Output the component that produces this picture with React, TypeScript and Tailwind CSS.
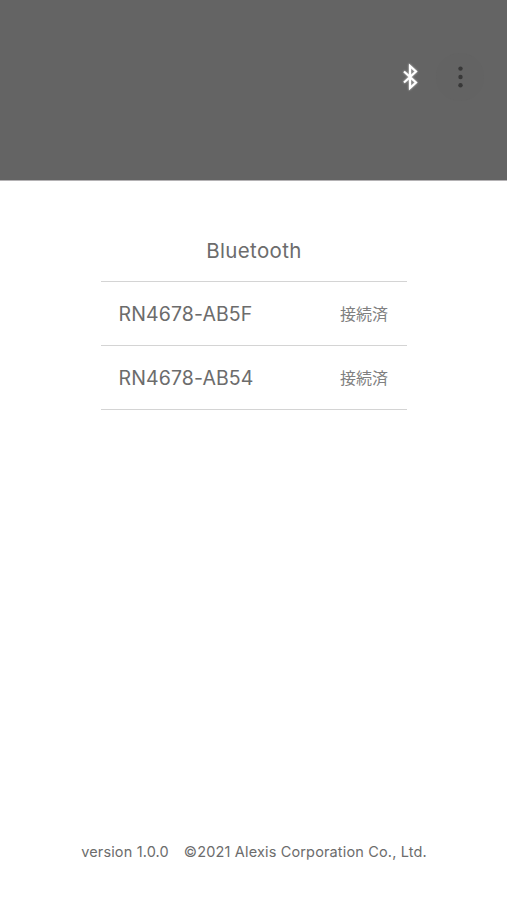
const devices = [
  { name: "RN4678-AB5F", status: "接続済" },
  { name: "RN4678-AB54", status: "接続済" },
]

function BluetoothIcon() {
  return (
    <svg
      className="w-5 h-8 drop-shadow-[0_0_1px_#ffffff99]"
      viewBox="0 0 20 32"
      fill="none"
      stroke="white"
      strokeWidth="2.2"
    >
      <path d="M4 10.5 L16 21.5 L10 27 V5 L16 10.5 L4 21.5" />
    </svg>
  )
}

function MenuIcon() {
  return (
    <svg className="w-6 h-6" viewBox="0 0 24 24" fill="#383838">
      <circle cx="12.5" cy="3.6" r="2.2" />
      <circle cx="12.5" cy="12" r="2.2" />
      <circle cx="12.5" cy="20.2" r="2.2" />
    </svg>
  )
}

export default function App() {
  return (
    <div className="flex flex-col w-full h-[900px] bg-white font-['Inter','Noto_Sans_CJK_JP',sans-serif] text-[#6c6c6c]">
      <header className="h-[181px] shrink-0 bg-[#646464] border-b border-[#b4b2b4] pt-[53px] pr-[23px]">
        <div className="flex items-center justify-end gap-4">
          <button>
            <BluetoothIcon />
          </button>
          <button className="flex items-center justify-center w-12 h-12 rounded-full bg-[#636363]">
            <MenuIcon />
          </button>
        </div>
      </header>

      <main className="w-[306px] ml-[101px] pt-[52px] grow">
        <h1 className="h-[48px] pt-1 text-center text-[20.5px] leading-[28px] tracking-[0.35px]">Bluetooth</h1>
        <ul className="border-t border-[#d4d4d4]">
          {devices.map((device) => (
            <li
              key={device.name}
              className="flex items-center justify-between h-[64px] pl-[17.5px] pr-[19px] border-b border-[#d4d4d4]"
            >
              <span className="pt-px text-[19.5px] leading-7 tracking-[0.12px]">{device.name}</span>
              <span className="text-[16px] leading-6 text-[#808080]">{device.status}</span>
            </li>
          ))}
        </ul>
      </main>

      <footer className="flex justify-center gap-[15px] h-[58px] pl-px text-[14.5px] leading-5 tracking-[0.15px] whitespace-nowrap">
        <span>version 1.0.0</span>
        <span>©2021 Alexis Corporation Co., Ltd.</span>
      </footer>
    </div>
  )
}
